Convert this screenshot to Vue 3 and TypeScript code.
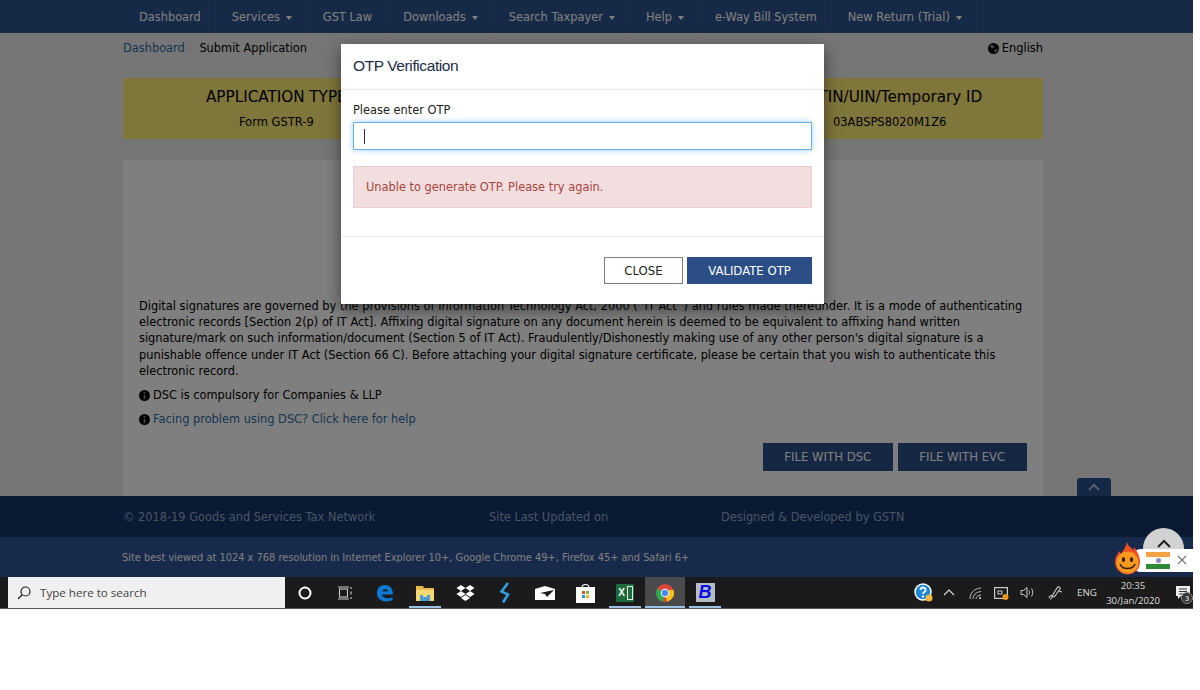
<template>
  <div class="screen">
    <div class="page">
      <nav class="topnav">
        <a v-for="item in navItems" :key="item.label" class="nav-item">
          {{ item.label }}<span v-if="item.caret" class="caret"></span>
        </a>
      </nav>

      <main class="content">
        <div class="crumbs">
          <span class="crumb-link">Dashboard</span>
          <span class="crumb-sep">›</span>
          <span class="crumb-now">Submit Application</span>
          <span class="lang">
            <svg width="11" height="11" viewBox="0 0 12 12">
              <circle cx="6" cy="6" r="6" fill="#000" />
              <path d="M2.500 2l3.500 .5 1 2.500-2 1-2.500-1.500zM7 7.500l3.500-1.500-.5 2.500-2 2-1-1z" fill="#8a8a8a" />
            </svg>
            English
          </span>
        </div>

        <div class="app-strip">
          <div class="strip-col">
            <div class="strip-title">APPLICATION TYPE</div>
            <div class="strip-value">Form GSTR-9</div>
          </div>
          <div class="strip-col"></div>
          <div class="strip-col">
            <div class="strip-title">GSTIN/UIN/Temporary ID</div>
            <div class="strip-value">03ABSPS8020M1Z6</div>
          </div>
        </div>

        <section class="panel">
          <p class="legal">
            Digital signatures are governed by the provisions of Information Technology Act, 2000 ( 'IT Act' ) and rules made thereunder. It is a mode of authenticating electronic records [Section 2(p) of IT Act]. Affixing digital signature on any document herein is deemed to be equivalent to affixing hand written signature/mark on such information/document (Section 5 of IT Act). Fraudulently/Dishonestly making use of any other person's digital signature is a punishable offence under IT Act (Section 66 C). Before attaching your digital signature certificate, please be certain that you wish to authenticate this electronic record.
          </p>
          <div class="note">
            <svg class="info" width="11" height="11" viewBox="0 0 12 12">
              <circle cx="6" cy="6" r="6" fill="#000" />
              <rect x="5" y="2" width="2" height="2" fill="#808080" />
              <rect x="5" y="5" width="2" height="5" fill="#808080" />
            </svg>
            DSC is compulsory for Companies &amp; LLP
          </div>
          <div class="note">
            <svg class="info" width="11" height="11" viewBox="0 0 12 12">
              <circle cx="6" cy="6" r="6" fill="#000" />
              <rect x="5" y="2" width="2" height="2" fill="#808080" />
              <rect x="5" y="5" width="2" height="5" fill="#808080" />
            </svg>
            <span class="note-link">Facing problem using DSC? Click here for help</span>
          </div>
          <div class="panel-actions">
            <button class="btn-file">FILE WITH DSC</button>
            <button class="btn-file">FILE WITH EVC</button>
          </div>
          <div class="top-tab">
            <svg width="14" height="8" viewBox="0 0 14 8"><path d="M2 7l5-5 5 5" fill="none" stroke="#fff" stroke-opacity=".75" stroke-width="1.600" /></svg>
          </div>
        </section>
      </main>

      <footer>
        <div class="foot-top">
          <span class="ft-a">© 2018-19 Goods and Services Tax Network</span>
          <span class="ft-b">Site Last Updated on</span>
          <span class="ft-c">Designed &amp; Developed by GSTN</span>
        </div>
        <div class="foot-bottom">Site best viewed at 1024 x 768 resolution in Internet Explorer 10+, Google Chrome 49+, Firefox 45+ and Safari 6+</div>
      </footer>

      <div class="backdrop"></div>

      <div class="modal">
        <div class="modal-head">OTP Verification</div>
        <div class="modal-body">
          <label class="otp-label">Please enter OTP</label>
          <div class="otp-input"><span class="cursor"></span></div>
          <div class="alert">Unable to generate OTP. Please try again.</div>
        </div>
        <div class="modal-foot">
          <button class="btn-close">CLOSE</button>
          <button class="btn-validate">VALIDATE OTP</button>
        </div>
      </div>

      <div class="scroll-circle">
        <svg width="16" height="10" viewBox="0 0 16 10"><path d="M2 8l6-6 6 6" fill="none" stroke="#222" stroke-width="2" /></svg>
      </div>
      <div class="hola">
        <svg class="hola-face" width="25" height="33" viewBox="0 0 25 33">
          <path d="M12 0c1 4 4 5 6 8 1-1 1-2 1-3 3 4 6 9 6 15a12.500 12.500 0 0 1-25 0c0-5 3-8 4-11 1 1 1 2 2 3 2-4 5-7 6-12z" fill="#ee4e20" />
          <circle cx="12.500" cy="20.500" r="11" fill="#f79a1e" />
          <ellipse cx="8.500" cy="17.500" rx="1.600" ry="2.500" fill="#3a1a08" />
          <ellipse cx="16.500" cy="17.500" rx="1.600" ry="2.500" fill="#3a1a08" />
          <path d="M5 22c2 6 13 6 15 0" fill="none" stroke="#3a1a08" stroke-width="1.500" />
        </svg>
        <div class="flag">
          <span class="saffron"></span>
          <span class="wheel"></span>
          <span class="green"></span>
        </div>
        <svg class="hola-x" width="10" height="10" viewBox="0 0 10 10"><path d="M1 1l8 8M9 1l-8 8" stroke="#777" stroke-width="1.200" /></svg>
      </div>
    </div>

    <div class="taskbar">
      <div class="search">
        <svg width="14" height="14" viewBox="0 0 14 14">
          <circle cx="8.500" cy="5.500" r="4.500" fill="none" stroke="#222" stroke-width="1.200" />
          <path d="M5.200 8.800L1 13" stroke="#222" stroke-width="1.300" />
        </svg>
        <span>Type here to search</span>
      </div>

      <div class="slot">
        <svg width="14" height="14" viewBox="0 0 14 14"><circle cx="7" cy="7" r="5.500" fill="none" stroke="#fff" stroke-width="2" /></svg>
      </div>
      <div class="slot">
        <svg width="15" height="14" viewBox="0 0 15 14" fill="none" stroke="#ccc" stroke-width="1.100">
          <rect x="1.500" y="3" width="8" height="8" />
          <path d="M0 1h11M0 13h11M13 1v2M13 5.500v3M13 11v2" />
        </svg>
      </div>
      <div class="slot">
        <svg width="18" height="18" viewBox="0 0 18 18">
          <path d="M1 9c0-5 3.500-8 8-8 4.500 0 8 3 8 9.500H6c.3 4 6 5 10.500 2.300V16c-6.500 3.300-15.500 1-15.500-7zM6.200 7.300h6C12 4.500 7 4.500 6.200 7.300z" fill="#0a78d4" />
        </svg>
      </div>
      <div class="slot underlined">
        <svg width="18" height="16" viewBox="0 0 18 16">
          <path d="M0 1h7l1 2h10v4H0z" fill="#e9b949" />
          <path d="M0 5h18v11H0z" fill="#f8d775" />
          <path d="M4 10h10v6H4z" fill="#4a9ad4" />
          <path d="M7 10h4v2H7z" fill="#f8d775" />
        </svg>
      </div>
      <div class="slot">
        <svg width="19" height="16" viewBox="0 0 19 16" fill="#fff">
          <path d="M5 0l4.500 3L5 6 .5 3zM14 0l4.500 3L14 6 9.500 3zM5 6l4.500 3L5 12 .5 9zM14 6l4.500 3L14 12 9.500 9zM5 13l4.500-3 4.500 3-4.500 3z" />
        </svg>
      </div>
      <div class="slot">
        <svg width="12" height="22" viewBox="0 0 12 22">
          <path d="M9 1L2.500 9.500l6.500 3-5 8" fill="none" stroke="#2f9fe0" stroke-width="2.600" />
        </svg>
      </div>
      <div class="slot">
        <svg width="20" height="14" viewBox="0 0 20 14">
          <path d="M0 3L10 0l10 3v11H0z" fill="#fff" />
          <path d="M5 7l14-3-7 7-2-3z" fill="#1a1a1a" />
        </svg>
      </div>
      <div class="slot">
        <svg width="19" height="20" viewBox="0 0 19 20">
          <path d="M6 5a3.500 3.500 0 0 1 7 0" fill="none" stroke="#fff" stroke-width="1.200" />
          <rect x="0" y="4" width="19" height="16" fill="#fff" />
          <rect x="6" y="8" width="3" height="3" fill="#e8502a" />
          <rect x="10" y="8" width="3" height="3" fill="#7cb92e" />
          <rect x="6" y="12" width="3" height="3" fill="#1c9ae0" />
          <rect x="10" y="12" width="3" height="3" fill="#f6b81c" />
        </svg>
      </div>
      <div class="slot underlined">
        <div class="excel"><span class="excel-x">X</span><span class="excel-grid"></span></div>
      </div>
      <div class="slot active">
        <svg width="18" height="18" viewBox="0 0 18 18">
          <circle cx="9" cy="9" r="9" fill="#e0463a" />
          <path d="M9 9L1.200 4.500A9 9 0 0 0 7 17.800z" fill="#2da94f" />
          <path d="M9 9l2 8.800A9 9 0 0 0 17.500 6H9z" fill="#fbc116" />
          <circle cx="9" cy="9" r="4.300" fill="#fff" />
          <circle cx="9" cy="9" r="3.300" fill="#4a8af4" />
        </svg>
      </div>
      <div class="slot underlined">
        <div class="b-logo">B</div>
      </div>

      <div class="tray">
        <div class="tray-slot">
          <svg width="19" height="19" viewBox="0 0 19 19">
            <circle cx="9" cy="9" r="8" fill="#1f86d6" stroke="#fff" stroke-width="1.500" />
            <path d="M6.500 7a2.500 2.500 0 1 1 3.500 2.300c-.7.4-1 .8-1 1.700" fill="none" stroke="#fff" stroke-width="1.800" />
            <rect x="8" y="12.500" width="2" height="2" fill="#fff" />
            <circle cx="15" cy="15" r="3.500" fill="#f2b93b" />
          </svg>
        </div>
        <div class="tray-slot">
          <svg width="12" height="7" viewBox="0 0 12 7"><path d="M1 6l5-5 5 5" fill="none" stroke="#ddd" stroke-width="1.100" /></svg>
        </div>
        <div class="tray-slot">
          <svg width="13" height="12" viewBox="0 0 13 12" fill="none" stroke="#bbb" stroke-width="1">
            <path d="M1 12C1 6 5 1.500 12 1M4 12c0-4 3-7 8-7.500M7 12c0-2 2-4 5-4" />
            <circle cx="11" cy="11" r="1" fill="#ddd" stroke="none" />
          </svg>
        </div>
        <div class="tray-slot">
          <svg width="15" height="14" viewBox="0 0 15 14">
            <rect x=".6" y="1.600" width="12.800" height="10.800" fill="none" stroke="#ccc" stroke-width="1.200" />
            <rect x="4" y="5" width="4" height="3" fill="none" stroke="#ccc" />
            <circle cx="11.500" cy="11" r="3" fill="#f0941d" />
          </svg>
        </div>
        <div class="tray-slot">
          <svg width="15" height="13" viewBox="0 0 15 13" fill="none" stroke="#ccc" stroke-width="1">
            <path d="M1 4.500h2.500L7 1.500v10L3.500 8.500H1z" />
            <path d="M9 4.500c.8 1 .8 3 0 4M11.500 2.500c1.600 2 1.600 6 0 8" />
          </svg>
        </div>
        <div class="tray-slot pen">
          <svg width="15" height="15" viewBox="0 0 15 15" fill="none" stroke="#ccc" stroke-width="1.100">
            <path d="M1 13c0-2 2-3 3-2s-1 3-2 3M4 11l5-8c1-2 4-1 3 1L7 11c-1 1-2 1-3 0zM10 6l4 1" />
          </svg>
        </div>
        <div class="tray-eng">ENG</div>
        <div class="clock">
          <span>20:35</span>
          <span>30/Jan/2020</span>
        </div>
        <div class="notif">
          <svg width="14" height="13" viewBox="0 0 14 13">
            <path d="M0 0h14v10H5l-3 3v-3H0z" fill="#eee" />
            <path d="M3 3h8M3 5.500h8M3 8h5" stroke="#333" />
          </svg>
          <span class="notif-count">3</span>
        </div>
      </div>
    </div>
  </div>
</template>

<script setup lang="ts">
interface NavItem {
  label: string
  caret?: boolean
}

const navItems: NavItem[] = [
  { label: 'Dashboard' },
  { label: 'Services', caret: true },
  { label: 'GST Law' },
  { label: 'Downloads', caret: true },
  { label: 'Search Taxpayer', caret: true },
  { label: 'Help', caret: true },
  { label: 'e-Way Bill System' },
  { label: 'New Return (Trial)', caret: true }
]
</script>

<style>
html, body {
  background: #fff;
  overflow: hidden;
}
</style>

<style scoped>
.screen {
  width: 1193px;
  height: 609px;
  display: flex;
  flex-direction: column;
  font-family: "DejaVu Sans", Verdana, sans-serif;
  font-size: 11.400px;
  color: #000;
}

.page {
  position: relative;
  height: 577px;
  display: flex;
  flex-direction: column;
  background: #ececec;
  overflow: hidden;
}

.topnav {
  height: 33px;
  flex: none;
  display: flex;
  padding-left: 123px;
  background: #2c5490;
}

.nav-item {
  display: flex;
  align-items: center;
  padding: 0 14px 0 16px;
  border-right: 1px solid #34598f;
  color: #fff;
  white-space: nowrap;
}

.caret {
  margin-left: 6px;
  margin-top: 2px;
  border-left: 3.500px solid transparent;
  border-right: 3.500px solid transparent;
  border-top: 4px solid #fff;
}

.content {
  flex: 1;
  display: flex;
  flex-direction: column;
  padding: 0 150px 0 123px;
}

.crumbs {
  height: 30px;
  display: flex;
  align-items: center;
}

.crumb-link { color: #2c6aa0; }
.crumb-sep { color: #ccc; margin: 0 7px 0 3px; }
.crumb-now { color: #000; }

.lang {
  margin-left: auto;
  display: flex;
  align-items: center;
  gap: 3px;
}

.app-strip {
  margin-top: 15px;
  height: 61px;
  flex: none;
  display: grid;
  grid-template-columns: 1fr 1fr 1fr;
  background: #ffec78;
}

.strip-col {
  text-align: center;
  padding-top: 9px;
  min-width: 0;
}

.strip-title {
  font-size: 15.200px;
  line-height: 20px;
  white-space: nowrap;
}

.strip-value {
  margin-top: 8px;
  font-size: 11.500px;
  line-height: 14px;
}

.panel {
  position: relative;
  flex: 1;
  margin-top: 21px;
  padding: 138px 16px 0;
  background: #fff;
  display: flex;
  flex-direction: column;
}

.legal {
  margin: 0 0 8px;
  line-height: 16.200px;
}

.note {
  display: flex;
  align-items: center;
  gap: 3px;
  height: 16px;
  margin-bottom: 8px;
}

.note-link { color: #2c6aa0; }

.panel-actions {
  display: flex;
  justify-content: flex-end;
  gap: 5px;
  margin-top: 8px;
}

.btn-file {
  width: 129.500px;
  height: 28px;
  border: 0;
  padding: 0;
  background: #2c4e86;
  color: #fff;
  font: 11.700px "DejaVu Sans", sans-serif;
}

.top-tab {
  position: absolute;
  right: -68px;
  bottom: 0;
  width: 34px;
  height: 18px;
  display: flex;
  align-items: center;
  justify-content: center;
  background: #28508c;
  border-radius: 3px 3px 0 0;
}

footer {
  flex: none;
}

.foot-top {
  height: 41px;
  display: flex;
  align-items: center;
  background: #143466;
  color: #90a8c8;
}

.ft-a { margin-left: 123px; width: 366px; }
.ft-b { width: 232px; }

.foot-bottom {
  height: 40px;
  padding-left: 122px;
  display: flex;
  align-items: center;
  background: #305496;
  color: #fff;
  font-size: 9.840px;
}

.backdrop {
  position: absolute;
  inset: 0;
  background: rgba(0, 0, 0, 0.5);
}

.modal {
  position: absolute;
  left: 341px;
  top: 44px;
  width: 483px;
  height: 260px;
  background: #fff;
  box-shadow: 0 5px 15px rgba(0, 0, 0, 0.5);
  display: flex;
  flex-direction: column;
}

.modal-head {
  height: 46px;
  flex: none;
  box-sizing: border-box;
  padding: 0 12px 1px;
  display: flex;
  align-items: center;
  border-bottom: 1px solid #e5e5e5;
  font: 15.500px "Liberation Sans", Arial, sans-serif;
  letter-spacing: -0.400px;
  color: #1b2c4a;
}

.modal-body {
  height: 147px;
  flex: none;
  box-sizing: border-box;
  padding: 0 12px;
  border-bottom: 1px solid #eee;
}

.otp-label {
  display: block;
  margin-top: 13px;
  line-height: 14px;
  color: #222;
}

.otp-input {
  margin-top: 5px;
  height: 28px;
  box-sizing: border-box;
  border: 1px solid #66afe9;
  box-shadow: 0 0 6px rgba(102, 175, 233, 0.6);
  display: flex;
  align-items: center;
  padding-left: 10px;
}

.cursor {
  width: 1px;
  height: 15px;
  background: #333;
}

.alert {
  margin-top: 16px;
  height: 42px;
  box-sizing: border-box;
  padding-left: 12px;
  display: flex;
  align-items: center;
  background: #f2dede;
  border: 1px solid #ebccd1;
  color: #a94442;
}

.modal-foot {
  display: flex;
  justify-content: flex-end;
  gap: 4px;
  padding: 20px 12px 0;
}

.btn-close {
  width: 79px;
  height: 27px;
  padding: 0;
  background: #fff;
  border: 1px solid #7c7c7c;
  color: #222;
  font: 11.700px "DejaVu Sans", sans-serif;
}

.btn-validate {
  width: 125px;
  height: 27px;
  padding: 0;
  border: 0;
  background: #2c4e86;
  color: #fff;
  font: 11.700px "DejaVu Sans", sans-serif;
}

.scroll-circle {
  position: absolute;
  left: 1143px;
  top: 528px;
  width: 41px;
  height: 41px;
  border-radius: 50%;
  background: #d2d2d2;
  display: flex;
  justify-content: center;
  padding-top: 11px;
  box-sizing: border-box;
}

.hola {
  position: absolute;
  left: 1130px;
  top: 549px;
  width: 63px;
  height: 23px;
  background: #fff;
  border-radius: 12px 0 0 12px;
}

.hola-face {
  position: absolute;
  left: -15px;
  top: -7px;
}

.flag {
  position: absolute;
  left: 16px;
  top: 3px;
  width: 24px;
  height: 17px;
  display: flex;
  flex-direction: column;
  align-items: center;
  justify-content: space-between;
}

.saffron, .green {
  width: 100%;
  height: 5px;
}

.saffron { background: #f5a246; }
.green { background: #2e8a37; }

.wheel {
  width: 5px;
  height: 5px;
  border-radius: 50%;
  background: #8e8ac0;
}

.hola-x {
  position: absolute;
  left: 47px;
  top: 6px;
}

.taskbar {
  height: 31px;
  flex: none;
  display: flex;
  align-items: stretch;
  padding-left: 8px;
  background: #1b1b1b;
  border-bottom: 1px solid #555;
}

.search {
  width: 277px;
  display: flex;
  align-items: center;
  gap: 9px;
  padding-left: 9px;
  box-sizing: border-box;
  background: #f0f0f0;
  color: #444;
  font: 11.600px "Open Sans", sans-serif;
}

.slot {
  width: 40px;
  display: flex;
  align-items: center;
  justify-content: center;
  box-sizing: border-box;
  position: relative;
}

.slot.underlined::after,
.slot.active::after {
  content: '';
  position: absolute;
  left: 4px;
  right: 4px;
  bottom: 0;
  height: 2px;
  background: #9cc3e6;
}

.slot.active { background: #4a4a4a; }
.slot.active::after { left: 0; right: 0; }

.excel {
  width: 18px;
  height: 18px;
  display: flex;
  background: #1d6b3c;
  border-radius: 1px;
}

.excel-x {
  width: 11px;
  color: #fff;
  font: bold 10px/18px "Liberation Sans", sans-serif;
  text-align: center;
}

.excel-grid {
  width: 6px;
  margin: 2px 0;
  border: 1px solid #e6e6e6;
  box-sizing: border-box;
}

.b-logo {
  width: 19px;
  height: 19px;
  background: #b5bcc4;
  color: #0a0ae6;
  font: italic bold 18px/19px "Liberation Sans", sans-serif;
  text-align: center;
}

.tray {
  margin-left: auto;
  display: flex;
  align-items: center;
  color: #ddd;
}

.tray-slot {
  width: 26px;
  display: flex;
  justify-content: center;
}

.tray-slot.pen { margin-left: 2px; }

.tray-eng {
  width: 26px;
  margin-left: 6px;
  text-align: center;
  font: 9.800px "Open Sans", sans-serif;
}

.clock {
  width: 66px;
  display: flex;
  flex-direction: column;
  align-items: center;
  font: 9.600px/15px "Open Sans", sans-serif;
}

.notif {
  position: relative;
  width: 20px;
  margin-left: 7px;
  display: flex;
  justify-content: center;
}

.notif-count {
  position: absolute;
  right: 0;
  top: 6px;
  width: 10px;
  height: 10px;
  border-radius: 50%;
  background: #333;
  border: 1px solid #888;
  font: 8px/10px "Open Sans", sans-serif;
  text-align: center;
  color: #fff;
}
</style>
